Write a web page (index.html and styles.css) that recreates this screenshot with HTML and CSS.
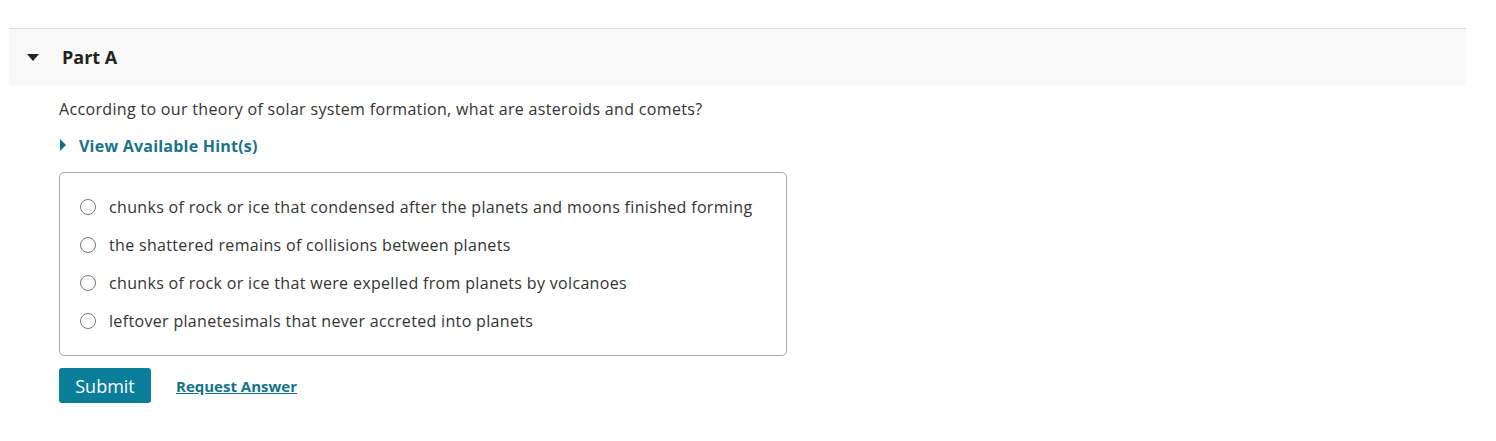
FILE: index.html
```html
<!DOCTYPE html>
<html>
<head>
<meta charset="utf-8">
<link rel="stylesheet" href="styles.css">
</head>
<body>
<div class="page">
  <div class="part-header">
    <span class="caret-down"></span>
    <h2 class="part-title">Part A</h2>
  </div>
  <div class="part-body">
    <p class="question">According to our theory of solar system formation, what are asteroids and comets?</p>
    <div class="hint">
      <span class="caret-right"></span>
      <span class="hint-text">View Available Hint(s)</span>
    </div>
    <div class="choices">
      <label class="choice"><span class="radio"></span><span>chunks of rock or ice that condensed after the planets and moons finished forming</span></label>
      <label class="choice"><span class="radio"></span><span>the shattered remains of collisions between planets</span></label>
      <label class="choice"><span class="radio"></span><span>chunks of rock or ice that were expelled from planets by volcanoes</span></label>
      <label class="choice"><span class="radio"></span><span>leftover planetesimals that never accreted into planets</span></label>
    </div>
    <div class="actions">
      <button class="submit">Submit</button>
      <a class="request" href="#">Request Answer</a>
    </div>
  </div>
</div>
</body>
</html>
```

FILE: styles.css
```css
* { box-sizing: border-box; }
body {
  margin: 0;
  background: #fff;
  font-family: "Open Sans", "Noto Sans", sans-serif;
  color: #333;
}
.page {
  padding: 28px 30px 0 9px;
}
.part-header {
  display: flex;
  align-items: center;
  height: 58px;
  background: #f9f9f9;
  border-top: 1px solid #dcdcdc;
  padding-left: 18px;
  padding-bottom: 2px;
}
.caret-down {
  width: 0;
  height: 0;
  border-left: 6px solid transparent;
  border-right: 6px solid transparent;
  border-top: 7px solid #222;
  margin-top: 1px;
}
.part-title {
  margin: 0 0 0 23px;
  font-size: 18px;
  font-weight: 700;
  color: #222;
}
.part-body {
  padding-left: 50px;
}
.question {
  margin: 11px 0 0;
  font-size: 16px;
  line-height: 24px;
  letter-spacing: 0.33px;
  color: #333;
}
.hint {
  display: flex;
  align-items: center;
  margin-top: 13px;
  height: 24px;
}
.caret-right {
  width: 0;
  height: 0;
  border-top: 6px solid transparent;
  border-bottom: 6px solid transparent;
  border-left: 6px solid #136e82;
  margin-left: 1px;
  margin-top: -3px;
}
.hint-text {
  margin-left: 13px;
  font-size: 16px;
  font-weight: 700;
  letter-spacing: 0.22px;
  color: #1a7389;
}
.choices {
  margin-top: 14px;
  width: 728px;
  border: 1px solid #aaa;
  border-radius: 5px;
  padding: 22px 0 22px 20px;
  display: flex;
  flex-direction: column;
  gap: 14px;
}
.choice {
  display: flex;
  align-items: center;
  height: 24px;
  font-size: 16px;
  letter-spacing: 0.33px;
  color: #333;
}
.radio {
  width: 16px;
  height: 16px;
  border: 1px solid #777;
  border-radius: 50%;
  margin-right: 13px;
  flex: none;
}
.actions {
  display: flex;
  align-items: center;
  margin-top: 12px;
}
.submit {
  width: 92px;
  height: 35px;
  background: #0a7d9a;
  color: #fff;
  border: none;
  border-radius: 3px;
  font-family: inherit;
  font-size: 18px;
  padding: 0;
}
.request {
  margin-left: 25px;
  font-size: 15px;
  font-weight: 700;
  color: #16718a;
  text-decoration: underline;
}
```
